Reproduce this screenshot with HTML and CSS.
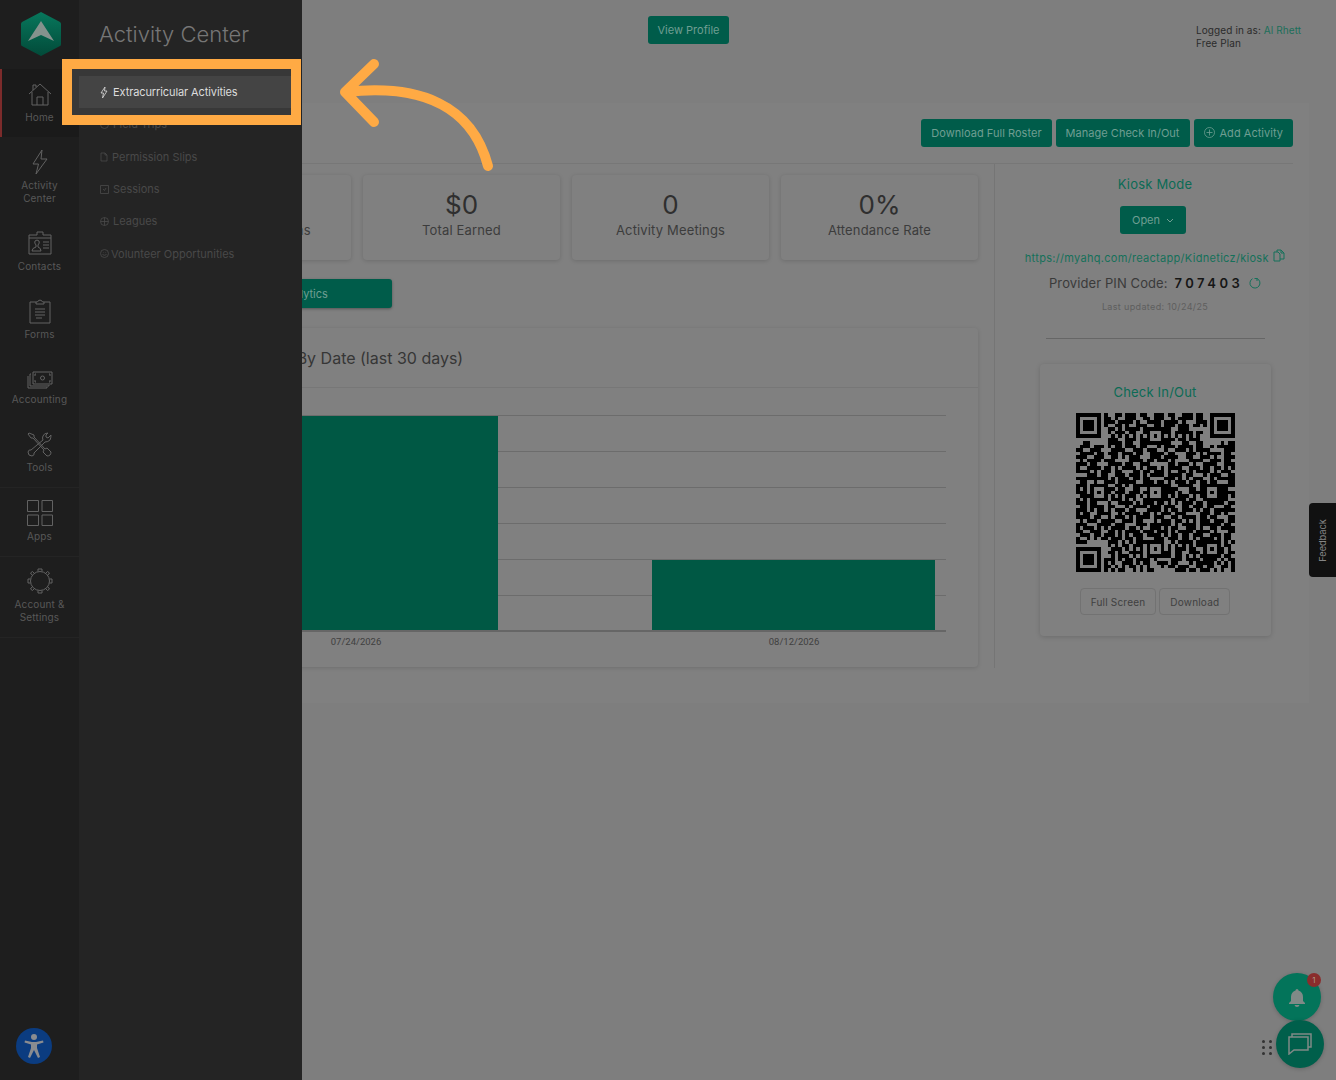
FILE: index.html
```html
<!DOCTYPE html>
<html lang="en">
<head>
    <meta charset="UTF-8">
    <title>Activity Center</title>
    <link rel="stylesheet" href="styles.css">
</head>
<body>
    <div class="app">
        <nav class="sidebar">
            <div class="logo">
                <svg width="42" height="46" viewBox="0 0 42 46">
                    <defs>
                        <linearGradient id="hex" x1="0" y1="0" x2="0" y2="1">
                            <stop offset="0" stop-color="#07775c"/>
                            <stop offset="1" stop-color="#024a39"/>
                        </linearGradient>
                    </defs>
                    <path d="M21 1 L40 11 Q41 12 41 13 V33 Q41 35 40 35 L21 45 L2 35 Q1 35 1 33 V13 Q1 12 2 11 Z" fill="url(#hex)"/>
                    <path d="M21 10 L34 30 L21 24 L8 30 Z" fill="#84928d"/>
                </svg>
            </div>
            <a class="nav-item active">
                <span class="nav-icon">
                    <svg width="24" height="24" viewBox="0 0 24 24"><path d="M1 12 L12 2 L23 12 M4 10 V23 H20 V10 M9 23 V15 H15 V23 M5 8 V3 H8 V5"/></svg>
                </span>
                Home
            </a>
            <a class="nav-item">
                <span class="nav-icon">
                    <svg width="18" height="26" viewBox="0 0 18 26"><path d="M11 1 L2 15 H7.5 L5 25 L16 10 H10 Z"/></svg>
                </span>
                Activity<br>Center
            </a>
            <a class="nav-item">
                <span class="nav-icon">
                    <svg width="24" height="24" viewBox="0 0 24 24"><path d="M1 4 H9 V1 H15 V4 H23 V23 H1 Z M1 7 H23 M4 20 Q4 17 8 16 V14 Q6 12 7 10 Q9 8 11 10 Q12 12 10 14 V16 Q13 17 13 20 Z M15 11 H21 M15 14 H21 M15 17 H21"/></svg>
                </span>
                Contacts
            </a>
            <a class="nav-item">
                <span class="nav-icon">
                    <svg width="22" height="25" viewBox="0 0 22 25"><path d="M7 3 H1 V24 H21 V3 H15 M7 5 V3 Q9 3 9 2 Q11 0 13 2 Q13 3 15 3 V5 Z M6 10 H16 M6 13 H16 M6 16 H16 M7 19 H13"/></svg>
                </span>
                Forms
            </a>
            <a class="nav-item short">
                <span class="nav-icon">
                    <svg width="26" height="18" viewBox="0 0 26 18"><path d="M6 1 H25 V13 H6 Z M4 3 H3 V15 H22 V14 M1 5 V17 H20 V16 M9 3 H8 V5 M22 3 H23 V5 M8 9 V11 H9 M23 9 V11 H22"/><circle cx="15.500" cy="7" r="2"/></svg>
                </span>
                Accounting
            </a>
            <a class="nav-item">
                <span class="nav-icon">
                    <svg width="25" height="25" viewBox="0 0 25 25"><path d="M2 1 L1 2 L4 6 L6 6 L17 18 L16 20 L20 24 Q22 24 23 23 Q24 22 24 20 L20 16 L18 17 L7 5 L7 3 Z M21 1 Q17 1 16 4 Q15 6 16 8 L4 18 Q2 17 1 20 Q1 24 5 24 Q8 23 7 21 L18 10 Q21 10 23 8 Q24 6 24 3 L21 6 L19 5 L19 3 Z"/></svg>
                </span>
                Tools
            </a>
            <a class="nav-item ruled">
                <span class="nav-icon">
                    <svg width="26" height="26" viewBox="0 0 26 26"><path d="M0.500 0.500 H11.500 V11.500 H0.500 Z M15 0.500 H25.500 V11.500 H15 Z M0.500 15 H11.500 V25.500 H0.500 Z M15 15 H25.500 V25.500 H15 Z"/></svg>
                </span>
                Apps
            </a>
            <a class="nav-item ruled last">
                <span class="nav-icon">
                    <svg width="26" height="26" viewBox="0 0 26 26"><circle cx="13" cy="13" r="9.500"/><path d="M11 3.500 V1 H15 V3.500 M11 22.500 V25 H15 V22.500 M3.500 11 H1 V15 H3.500 M22.500 11 H25 V15 H22.500 M5 7 L3.500 5 L5.500 3.500 L7 5 M21 7 L22.500 5 L20.500 3.500 L19 5 M5 19 L3.500 21 L5.500 22.500 L7 21 M21 19 L22.500 21 L20.500 22.500 L19 21"/></svg>
                </span>
                Account &amp;<br>Settings
            </a>
            <div class="access-btn">
                <svg width="22" height="26" viewBox="0 0 22 26"><circle cx="11" cy="4" r="3"/><path d="M2 7.500 L9 9 H13 L20 7.500 L20.500 9.500 L14 11.500 V15 L17 24 L15 25 L11 17 L7 25 L5 24 L8 15 V11.500 L1.500 9.500 Z"/></svg>
            </div>
        </nav>

        <main class="main">
            <header class="topbar">
                <a class="btn profile-btn">View Profile</a>
                <div class="logged-in">
                    Logged in as: <span class="link">Al Rhett</span><br>Free Plan
                </div>
            </header>

            <section class="panel">
                <div class="panel-head">
                    <a class="btn">Download Full Roster</a>
                    <a class="btn">Manage Check In/Out</a>
                    <a class="btn">
                        <svg class="plus" width="11" height="11" viewBox="0 0 11 11"><circle cx="5.500" cy="5.500" r="5"/><path d="M5.500 2.500 V8.500 M2.500 5.500 H8.500"/></svg>
                        Add Activity
                    </a>
                </div>
                <div class="panel-body">
                    <div class="left-col">
                        <div class="stats">
                            <div class="stat"><strong>0</strong><span>Total Registrations</span></div>
                            <div class="stat"><strong>$0</strong><span>Total Earned</span></div>
                            <div class="stat"><strong>0</strong><span>Activity Meetings</span></div>
                            <div class="stat"><strong>0%</strong><span>Attendance Rate</span></div>
                        </div>
                        <a class="btn analytics">Activity Analytics</a>
                        <div class="chart-card">
                            <h2 class="chart-title">Attendance By Date (last 30 days)</h2>
                            <svg class="chart" width="824" height="279" viewBox="0 0 824 279">
                                <g class="grid">
                                    <path d="M51 27.500 H792 M51 63.500 H792 M51 99.500 H792 M51 135.500 H792 M51 171.500 H792 M51 207.500 H792"/>
                                </g>
                                <rect class="bar" x="61" y="28" width="283" height="215"/>
                                <rect class="bar" x="498" y="172" width="283" height="71"/>
                                <path class="axis" d="M51 243 H792"/>
                                <text class="tick" x="202" y="257">07/24/2026</text>
                                <text class="tick" x="640" y="257">08/12/2026</text>
                            </svg>
                        </div>
                    </div>
                    <aside class="right-col">
                        <h3 class="kiosk-title">Kiosk Mode</h3>
                        <a class="btn open-btn">Open
                            <svg width="8" height="5" viewBox="0 0 8 5"><path d="M1 1 L4 4 L7 1"/></svg>
                        </a>
                        <div class="kiosk-url">
                            https://myahq.com/reactapp/Kidneticz/kiosk
                            <svg width="12" height="13" viewBox="0 0 12 13"><path d="M4 1 H8 L11 4 V10 H7 M4 1 V3 M8 1 V4 H11 M1 3 H5 L7 5 V12 H1 Z"/></svg>
                        </div>
                        <div class="pin">
                            Provider PIN Code: <b>707403</b>
                            <svg width="12" height="12" viewBox="0 0 12 12"><path d="M8 1.500 A5 5 0 1 1 3.500 1.700 M8 1 V4 M8 1.500 H5.500"/></svg>
                        </div>
                        <div class="updated">Last updated: 10/24/25</div>
                        <hr class="divider">
                        <div class="qr-card">
                            <h3 class="kiosk-title">Check In/Out</h3>
                            <svg id="qr" class="qr" width="159" height="159" viewBox="0 0 45 45" shape-rendering="crispEdges"></svg>
                            <div class="qr-actions">
                                <a class="btn-plain">Full Screen</a>
                                <a class="btn-plain">Download</a>
                            </div>
                        </div>
                    </aside>
                </div>
            </section>
        </main>

        <!-- flyout sits over the left part of the page -->
        <div class="flyout">
            <div class="spot"></div>
            <h1>Activity Center</h1>
            <ul class="fly-list">
                <li class="current">
                    <svg width="8" height="13" viewBox="0 0 8 13"><path d="M5 1 L1 7 H3.500 L2.500 12 L7 5 H4.500 Z"/></svg>
                    Extracurricular Activities
                </li>
                <li>
                    <svg width="9" height="9" viewBox="0 0 9 9"><circle cx="4.500" cy="4.500" r="4"/></svg>
                    Field Trips
                </li>
                <li>
                    <svg width="8" height="10" viewBox="0 0 8 10"><path d="M1 1 H5 L7 3 V9 H1 Z M5 1 V3 H7"/></svg>
                    Permission Slips
                </li>
                <li>
                    <svg width="9" height="9" viewBox="0 0 9 9"><path d="M0.500 0.500 H8.500 V8.500 H0.500 Z M3 4 L4.500 5.500 L6 3"/></svg>
                    Sessions
                </li>
                <li>
                    <svg width="9" height="9" viewBox="0 0 9 9"><circle cx="4.500" cy="4.500" r="4"/><path d="M0.500 4.500 H8.500 M4.500 0.500 V8.500"/></svg>
                    Leagues
                </li>
                <li class="tight">
                    <svg width="9" height="9" viewBox="0 0 9 9"><circle cx="4.500" cy="4.500" r="4"/><path d="M2.500 5.500 Q4.500 7 6.500 5.500 M3 3.500 H3.500 M5.500 3.500 H6"/></svg>
                    Volunteer Opportunities
                </li>
            </ul>
        </div>

        <svg class="callout" width="1336" height="1080" viewBox="0 0 1336 1080">
            <rect x="67" y="64" width="229" height="56"/>
            <path d="M488 166 C472 105 420 84 346 92 M374 64 L345 92 L374 122"/>
        </svg>

        <div class="feedback"><span>Feedback</span></div>

        <div class="fab bell">
            <svg width="18" height="19" viewBox="0 0 18 19"><path d="M9 1 Q10.500 1 10.500 2.500 Q15 4 15 9 V13 L17 15 V16 H1 V15 L3 13 V9 Q3 4 7.500 2.500 Q7.500 1 9 1 Z M6.500 17 H11.500 Q11 19 9 19 Q7 19 6.500 17 Z"/></svg>
            <span class="badge">1</span>
        </div>
        <div class="drag-dots"><i></i><i></i><i></i><i></i><i></i><i></i></div>
        <div class="fab chat">
            <svg width="24" height="22" viewBox="0 0 24 22"><path d="M4 4 V1 H23 V14 H20 M1 4 H20 V17 H6 L1 21 Z"/></svg>
        </div>
    </div>
    <script src="qr.js"></script>
</body>
</html>
```

FILE: styles.css
```css
* {
    box-sizing: border-box;
    margin: 0;
    padding: 0;
}
body {
    background: #7e7e7e;
    color: #3a3a3a;
    font-family: 'Inter', 'Open Sans', 'Liberation Sans', sans-serif;
    height: 100vh;
    overflow: hidden;
}
.app {
    display: flex;
    height: 100vh;
    position: relative;
}
svg {
    fill: none;
}

/* left rail */
.sidebar {
    background: #1e1e1e;
    color: #585858;
    display: flex;
    flex-direction: column;
    flex-shrink: 0;
    position: relative;
    width: 79px;
}
.logo {
    display: flex;
    height: 69px;
    justify-content: center;
    padding: 11px 0 0 2px;
}
.nav-item {
    display: block;
    font-size: 10px;
    letter-spacing: 0.15px;
    line-height: 13px;
    padding: 12px 0 13px;
    text-align: center;
}
.nav-item.active {
    background: #1a1a1a;
    border-left: 2px solid #7c2b2b;
    padding-right: 2px;
}
.nav-item.ruled {
    border-top: 1px solid #242424;
}
.nav-item.last {
    box-shadow: 0 1px 0 #242424;
    padding-top: 11px;
}
.nav-icon {
    align-items: center;
    display: flex;
    height: 26px;
    justify-content: center;
    margin-bottom: 4px;
}
.short .nav-icon {
    height: 23px;
    padding-top: 4px;
}
.nav-icon svg {
    stroke: #626262;
    stroke-width: 1;
}
.access-btn {
    align-items: center;
    background: #0b3c80;
    border-radius: 50%;
    bottom: 16px;
    display: flex;
    height: 36px;
    justify-content: center;
    left: 16px;
    position: absolute;
    width: 36px;
}
.access-btn svg {
    fill: #8a8c90;
}

/* page */
.main {
    display: flex;
    flex: 1;
    flex-direction: column;
    min-width: 0;
}
.topbar {
    align-items: flex-start;
    display: flex;
    height: 103px;
    padding: 16px 35px 0 569px;
}
.logged-in {
    color: #2b2b2b;
    font-size: 10px;
    letter-spacing: 0.1px;
    line-height: 13px;
    margin-left: auto;
    padding-top: 8px;
    white-space: nowrap;
    width: 105px;
}
.link {
    color: #1b6f5a;
}
.btn {
    align-items: center;
    background: #005c4a;
    border-radius: 3px;
    color: #6f9e92;
    display: inline-flex;
    font-size: 11px;
    height: 28px;
    justify-content: center;
    padding: 0 10px;
    white-space: nowrap;
}
.profile-btn {
    padding: 0;
    width: 81px;
}
.panel {
    background: #808080;
    height: 600px;
    margin: 0 27px 0 51px;
    padding: 0 16px;
}
.panel-head {
    align-items: center;
    border-bottom: 1px solid #777;
    display: flex;
    gap: 4px;
    height: 61px;
    justify-content: flex-end;
    padding-bottom: 1px;
}
.panel-head .btn {
    letter-spacing: 0.03px;
}
.plus {
    margin-right: 5px;
    stroke: #6f9e92;
    stroke-width: 0.800;
}
.panel-body {
    display: flex;
}
.left-col {
    border-right: 1px solid #757575;
    flex-shrink: 0;
    height: 504px;
    padding: 11px 16px 0 8px;
    width: 849px;
}
.stats {
    display: grid;
    gap: 12px;
    grid-template-columns: repeat(4, 1fr);
}
.stat {
    align-items: center;
    border-radius: 4px;
    box-shadow: 0 1px 4px rgba(0, 0, 0, 0.16);
    display: flex;
    flex-direction: column;
    height: 85px;
    padding-top: 14px;
}
.stat strong {
    color: #2f2f2f;
    font-size: 26px;
    font-weight: 400;
    line-height: 32px;
}
.stat span {
    color: #3c3c3c;
    font-size: 13px;
    letter-spacing: 0.15px;
    line-height: 18px;
}
.analytics {
    box-shadow: 0 1px 3px rgba(0, 0, 0, 0.35);
    display: flex;
    height: 29px;
    margin-top: 19px;
    padding-left: 30px;
    width: 238px;
}
.chart-card {
    border-radius: 4px;
    box-shadow: 0 1px 4px rgba(0, 0, 0, 0.14);
    height: 339px;
    margin-top: 20px;
}
.chart-title {
    border-bottom: 1px solid #777;
    color: #363636;
    font-size: 16px;
    font-weight: 400;
    height: 60px;
    line-height: 61px;
    padding-left: 52px;
}
.chart {
    display: block;
}
.grid path {
    stroke: #6c6c6c;
}
.axis {
    stroke: #666;
    stroke-width: 2;
}
.bar {
    fill: #005844;
}
.tick {
    fill: #3f3f3f;
    font-family: 'Roboto', sans-serif;
    font-size: 9.500px;
    text-anchor: middle;
}

/* kiosk column */
.right-col {
    align-items: center;
    display: flex;
    flex: 1;
    flex-direction: column;
    padding: 12px 0 0 22px;
    text-align: center;
}
.kiosk-title {
    color: #0b6b55;
    font-size: 13px;
    font-weight: 400;
    letter-spacing: 0.2px;
    line-height: 16px;
}
.open-btn {
    gap: 6px;
    margin: 14px 4px 0 0;
    width: 66px;
}
.open-btn svg {
    stroke: #6f9e92;
}
.kiosk-url {
    color: #15705a;
    font-size: 11px;
    letter-spacing: 0.3px;
    line-height: 16px;
    margin-top: 15px;
    white-space: nowrap;
}
.kiosk-url svg {
    margin-left: 1px;
    stroke: #15705a;
}
.pin {
    color: #3a3a3a;
    font-size: 13px;
    letter-spacing: 0.1px;
    line-height: 16px;
    margin-top: 9px;
    white-space: nowrap;
}
.pin b {
    color: #161616;
    font-weight: 600;
    letter-spacing: 3.500px;
    margin-left: 3px;
}
.pin svg {
    margin-left: 2px;
    stroke: #15705a;
    vertical-align: -1px;
}
.updated {
    color: #5e5e5e;
    font-size: 9px;
    letter-spacing: 0.35px;
    line-height: 12px;
    margin-top: 10px;
}
.divider {
    border: 0;
    border-top: 1px solid #666;
    margin-top: 25px;
    width: 219px;
}
.qr-card {
    border-radius: 4px;
    box-shadow: 0 1px 5px rgba(0, 0, 0, 0.16);
    height: 272px;
    margin-top: 25px;
    padding-top: 20px;
    width: 231px;
}
.qr {
    display: block;
    fill: #000;
    margin: 13px auto 0;
}
.qr-actions {
    display: flex;
    gap: 3px;
    justify-content: center;
    margin-top: 16px;
}
.btn-plain {
    align-items: center;
    border: 1px solid #727272;
    border-radius: 4px;
    color: #3f3f3f;
    display: flex;
    font-size: 10px;
    height: 27px;
    letter-spacing: 0.2px;
    padding: 0 10px;
}

/* category flyout */
.flyout {
    background: #242424;
    bottom: 0;
    left: 79px;
    position: absolute;
    top: 0;
    width: 223px;
}
.flyout h1 {
    color: #767676;
    font-size: 22px;
    font-weight: 300;
    line-height: 28px;
    padding: 20px 0 0 20px;
    position: relative;
}
.spot {
    background: #383838;
    height: 46px;
    left: -7px;
    position: absolute;
    top: 69px;
    width: 219px;
}
.fly-list {
    list-style: none;
    margin-top: 28px;
    position: relative;
}
.fly-list li {
    align-items: center;
    color: #494949;
    display: flex;
    font-size: 11px;
    gap: 4px;
    height: 32.300px;
    padding-left: 21px;
}
.fly-list svg {
    stroke: #4a4a4a;
    stroke-width: 0.800;
}
.fly-list .current {
    background: #444;
    color: #dcdcdc;
    gap: 5px;
    letter-spacing: -0.1px;
    width: 212px;
}
.fly-list .current svg {
    stroke: #dcdcdc;
}
.fly-list .tight {
    gap: 2px;
}

/* orange annotation */
.callout {
    left: 0;
    pointer-events: none;
    position: absolute;
    top: 0;
}
.callout rect {
    stroke: #ffaa44;
    stroke-width: 10;
}
.callout path {
    stroke: #ffaa44;
    stroke-linecap: round;
    stroke-linejoin: round;
    stroke-width: 10;
}

/* floating things on the right */
.feedback {
    align-items: center;
    background: #111;
    border-radius: 4px 0 0 4px;
    color: #858585;
    display: flex;
    font-size: 9.200px;
    height: 74px;
    justify-content: center;
    position: absolute;
    right: 0;
    top: 503px;
    width: 27px;
}
.feedback span {
    transform: rotate(-90deg);
}
.fab {
    align-items: center;
    border-radius: 50%;
    box-shadow: 0 1px 4px rgba(0, 0, 0, 0.2);
    display: flex;
    height: 48px;
    justify-content: center;
    position: absolute;
    width: 48px;
}
.bell {
    background: #03745a;
    left: 1273px;
    top: 973px;
}
.bell svg {
    fill: #7f8a87;
}
.badge {
    align-items: center;
    background: #8a2c2c;
    border-radius: 50%;
    color: #a98;
    display: flex;
    font-size: 8px;
    height: 14px;
    justify-content: center;
    position: absolute;
    right: 0;
    top: 0;
    width: 14px;
}
.chat {
    background: #005f4b;
    left: 1276px;
    top: 1020px;
}
.chat svg {
    stroke: #7f8a87;
    stroke-width: 1.500;
}
.drag-dots {
    display: grid;
    gap: 3px 4px;
    grid-template-columns: 3px 3px;
    left: 1262px;
    position: absolute;
    top: 1040px;
}
.drag-dots i {
    background: #333;
    border-radius: 50%;
    height: 3px;
    width: 3px;
}
```

FILE: qr.js
```js
// Draws the check-in QR code: data rows first, then the fixed patterns on top
const QR_SIZE = 45;
const QR_ROWS = [
    '........#..##.###.##..###.##..###.##...#.....',
    '........##.#..###..##.###..#.####.##.###.....',
    '........###.####.#..####.####.#...####.#.....',
    '........#..##.#..###..##.###.###.##.##.......',
    '........###.#.####.##.#####..###....###......',
    '........##.###.##..#####.##.#####.###.#......',
    '........#.#.#.#.#.#.#.#.#.#.#.#.#.#.#.#......',
    '........####..###.##..#..###.##.###.##.......',
    '..##.#...####.##..####.####...##..###.####.##',
    '.###.###.#.##.###.##...#.###.####.##..#.#####',
    '##..###...####..###.###..#..###.#.####....###',
    '.####.##.###.###.##..####.##...###.#.####.##.',
    '###..###..##.#.###...###.####..##..###.#..###',
    '.#.####.###....####.##.###.#....####..###.##.',
    '###.##...####.##..###.....##.###.#..####..###',
    '#..####.##.#.####.#.###.#.####..###.##.##.#.#',
    '####.#.###.##...##.##.###.#..##.#.####.#.###.',
    '...###.##..###.###.#.####.####.##...#.###..##',
    '#########.#.###.##.##....###.#.#.###..#.#####',
    '.##..#..###.#####..###.##.#.###.##.##.##...##',
    '###.###.#..##.#.######.####..####..###..#####',
    '#.#.###..##.##..##...###.####...##.#.###.##..',
    '###.##...#.###.###.##.##.###.#..####.#.#.####',
    '.###.###..#.#.###.#.###.##.#.###.#.####..##.#',
    '#.#..####.###.#.#..###..###.###.##...##.###..',
    '###.##...#..####.#.###.##.#.#.###.##.#####.##',
    '.##.####.##...#.####.###.###..##.###.##...##.',
    '###.#.##.#.###.##...####.#.##.###.#.##.######',
    '#.##..####..#.####.##.#.###.###....###.##.#..',
    '####.##..#.###.#.####.###..##.####.##.##...##',
    '.#.###.####..###.##...#.###.##.#.#.###.###.##',
    '###...####.###...###.######.#.####.######.##.',
    '#.###.#.#.####.##.#..###.#.##..###.#..##.####',
    '##..###..##.#.####.###.###.#.####.####.#...##',
    '.###.##.###.#.#.###.####.#.##.##.###..###.##.',
    '#..#.#.##.###.##.##...###.###.##.#.####.#.##.',
    '###.##...###.#.#.#####.#...#.####.##..###.#.#',
    '........##.#.##.###...###.#.#.#.#.####.##.##.',
    '........#.###.#.#.#.#####.#.###.##...#.###.#.',
    '........###.#..####.###.###.##..###.######.##',
    '........#.#.###.#.#.#.#.###.##.#.#.###.#..##.',
    '........###.#.##.####.#....###.####.####.#.##',
    '........#.#..###.#.##..###.##...#.#####.#.#.#',
    '........##.#.#.##.#.#...#.##.###..##.##..##.#',
    '........#.#.##..#.#.##......###.##.###.#.#..#'
];
const ALIGN_AT = [6, 22, 38];

function finder(x, y) {
    return `M${x} ${y}h7v7h-7zM${x + 1} ${y + 1}v5h5v-5zM${x + 2} ${y + 2}h3v3h-3z`;
}

function alignment(cx, cy) {
    const x = cx - 2, y = cy - 2;
    return `M${x} ${y}h5v5h-5zM${x + 1} ${y + 1}v3h3v-3zM${x + 2} ${y + 2}h1v1h-1z`;
}

let d = '';
QR_ROWS.forEach((row, y) => {
    for (let x = 0; x < QR_SIZE; x++) {
        const inFinder = (x < 8 && y < 8) || (x > 36 && y < 8) || (x < 8 && y > 36);
        const inAlign = ALIGN_AT.some(ax => ALIGN_AT.some(ay => Math.abs(x - ax) < 3 && Math.abs(y - ay) < 3));
        if (row[x] === '#' && !inFinder && !inAlign) d += `M${x} ${y}h1v1h-1z`;
    }
});
d += finder(0, 0) + finder(38, 0) + finder(0, 38);
ALIGN_AT.forEach(ax => ALIGN_AT.forEach(ay => {
    const clash = (ax === 6 && ay === 6) || (ax === 38 && ay === 6) || (ax === 6 && ay === 38);
    if (!clash) d += alignment(ax, ay);
}));

const path = document.createElementNS('http://www.w3.org/2000/svg', 'path');
path.setAttribute('d', d);
path.setAttribute('fill-rule', 'evenodd');
document.getElementById('qr').appendChild(path);
```
